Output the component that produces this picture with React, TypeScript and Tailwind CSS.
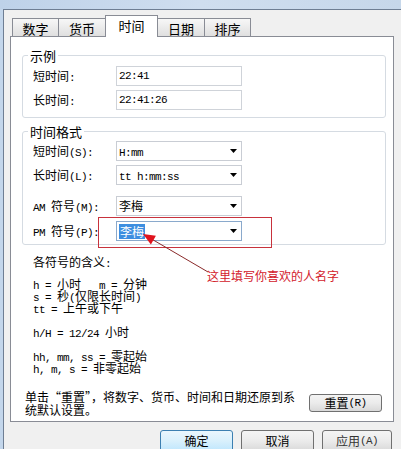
import React from 'react';

// mixed text: ascii runs in a narrow mono, CJK in Noto
function T({ s }: { s: string }) {
  const parts = s.match(/[\x00-\x7f]+|[^\x00-\x7f]+/g) || [];
  return (
    <>
      {parts.map((p, i) =>
        /^[\x00-\x7f]+$/.test(p) ? (
          <span key={i} className="font-['Liberation_Mono',monospace] text-[11px] tracking-[-0.6px] whitespace-pre">
            {p}
          </span>
        ) : (
          <span key={i} className="text-[12px] whitespace-pre">
            {p}
          </span>
        )
      )}
    </>
  );
}

function Arrow() {
  return (
    <svg width="7" height="4" viewBox="0 0 7 4" className="mr-[4px]">
      <path d="M0 0h7L3.5 4z" fill="#000" />
    </svg>
  );
}

function TextRow({ label, value }: { label: string; value: string }) {
  return (
    <div className="flex items-center h-[20px]">
      <div className="w-[83px] h-[14px] leading-[14px]">
        <T s={label} />
      </div>
      <div className="w-[126px] h-[20px] border border-[#cfd3d9] bg-white flex items-center pl-[2px] leading-[14px]">
        <T s={value} />
      </div>
    </div>
  );
}

function ComboRow({ label, value, focused, selected }: { label: string; value: string; focused?: boolean; selected?: boolean }) {
  return (
    <div className="flex items-center h-[20px]">
      <div className="w-[83px] h-[14px] leading-[14px]">
        <T s={label} />
      </div>
      <div
        className={
          'w-[126px] h-[20px] border bg-white flex items-center justify-between pl-[2px] leading-[14px] ' +
          (focused ? 'border-[#8aa9cc]' : 'border-[#c9cdd4]')
        }
      >
        {selected ? (
          <span className="bg-[#3d8ee0] text-white text-[12px] leading-[15px] px-[1px]">{value}</span>
        ) : (
          <span className="h-[14px]">
            <T s={value} />
          </span>
        )}
        <Arrow />
      </div>
    </div>
  );
}

function Line({ s }: { s: string }) {
  return (
    <div className="h-[12px] leading-[12px] whitespace-nowrap">
      <T s={s} />
    </div>
  );
}

const tabBase =
  'h-[19px] -ml-px border border-b-0 border-[#898c95] bg-gradient-to-b from-[#f7f7f7] to-[#dedede] flex items-center justify-center pt-[1px] text-[13px] leading-[15px]';

const grayBtn =
  'h-[22px] border border-[#707070] rounded-[3px] bg-gradient-to-b from-[#f4f4f4] via-[#ebebeb] to-[#d9d9d9] leading-[14px]';

export default function App() {
  return (
    <div className="w-[401px] h-[449px] bg-[#f0f0f0] overflow-hidden flex flex-col text-[12px] text-black font-['Noto_Sans_CJK_SC',sans-serif]">
      {/* window chrome */}
      <div className="h-[9px] shrink-0 bg-gradient-to-r from-[#bed2e9] via-[#cfdeef] to-[#c6d7ea]" />
      <div className="flex flex-1">
        <div className="w-[3px] bg-[#c3d6eb]" />
        <div className="flex-1 flex flex-col border-l border-t border-[#6e7e93] pl-[6px] pt-[5px]">
          {/* tabs */}
          <div className="flex items-end ml-[3px] h-[22px] shrink-0">
            <div className={tabBase + ' w-[47px]'}>数字</div>
            <div className={tabBase + ' w-[48px]'}>货币</div>
            <div className="relative z-10 -ml-px w-[53px] h-[22px] border border-b-0 border-[#898c95] bg-white flex items-center justify-center pb-[2px] text-[13px] leading-[15px]">
              时间
            </div>
            <div className={tabBase + ' w-[48px]'}>日期</div>
            <div className={tabBase + ' w-[47px]'}>排序</div>
          </div>

          {/* panel */}
          <div className="relative -mt-px w-[384px] h-[386px] shrink-0 border border-[#898c95] bg-white flex flex-col">
            <fieldset className="mt-[11px] ml-[11px] w-[364px] border border-[#d5dbe2] rounded-[3px] pl-[10px] pt-[3px] pb-[7px] flex flex-col gap-[4px]">
              <legend className="-ml-[5px] px-[2px] text-[13px] leading-[15px]">示例</legend>
              <TextRow label="短时间:" value="22:41" />
              <TextRow label="长时间:" value="22:41:26" />
            </fieldset>

            <fieldset className="mt-[6px] ml-[11px] w-[364px] border border-[#d5dbe2] rounded-[3px] pl-[10px] pt-[2px] pb-[3px] flex flex-col">
              <legend className="-ml-[5px] px-[2px] text-[13px] leading-[15px]">时间格式</legend>
              <ComboRow label="短时间(S):" value="H:mm" />
              <div className="h-[4px]" />
              <ComboRow label="长时间(L):" value="tt h:mm:ss" />
              <div className="h-[11px]" />
              <ComboRow label="AM 符号(M):" value="李梅" />
              <div className="h-[5px]" />
              <ComboRow label="PM 符号(P):" value="李梅" focused selected />
            </fieldset>

            <div className="pl-[22px] mt-[10px] h-[14px] leading-[14px]">
              <T s="各符号的含义:" />
            </div>
            <div className="pl-[22px] mt-[9px] flex flex-col">
              <Line s="h = 小时   m = 分钟" />
              <Line s="s = 秒(仅限长时间)" />
              <Line s="tt = 上午或下午" />
              <div className="h-[12px]" />
              <Line s="h/H = 12/24 小时" />
              <div className="h-[12px]" />
              <Line s="hh, mm, ss = 零起始" />
              <Line s="h, m, s = 非零起始" />
            </div>

            <div className="flex mt-[16px] pl-[14px] pr-[11px]">
              <div className="w-[280px] text-[12px] leading-[13px]">
                单击“重置”，将数字、货币、时间和日期还原到系统默认设置。
              </div>
              <button className="ml-auto mt-[4px] w-[73px] h-[18px] border border-[#707070] rounded-[3px] bg-gradient-to-b from-[#f4f4f4] via-[#ebebeb] to-[#d9d9d9] flex items-center justify-center leading-[14px]">
                <T s="重置(R)" />
              </button>
            </div>

            {/* annotation */}
            <div className="absolute left-[87px] top-[180px] w-[174px] h-[31px] border-[1.5px] border-[#c8323c]" />
            <svg className="absolute left-[124px] top-[188px]" width="80" height="55" viewBox="0 0 80 55">
              <line x1="73" y1="47" x2="14" y2="12.5" stroke="#8a2a2a" strokeWidth="1" />
              <polygon points="8,9 20.9,10.8 15.9,19.4" fill="#e0141e" />
            </svg>
            <div className="absolute left-[196px] top-[232px] text-[12px] leading-[14px] text-[#d3212b] whitespace-nowrap">
              这里填写你喜欢的人名字
            </div>
          </div>

          {/* dialog buttons */}
          <div className="flex mt-[8px] pl-[150px] gap-[8px]">
            <button className="w-[73px] h-[22px] border border-[#3c7fb1] rounded-[3px] bg-gradient-to-b from-[#eaf6fd] via-[#d9f0fc] to-[#bee6fd] text-[12px] leading-[14px]">
              确定
            </button>
            <button className={grayBtn + ' w-[73px] text-[12px]'}>取消</button>
            <button className={grayBtn + ' w-[70px] text-[#333] flex items-center justify-center'}>
              <T s="应用(A)" />
            </button>
          </div>
        </div>
      </div>
    </div>
  );
}
